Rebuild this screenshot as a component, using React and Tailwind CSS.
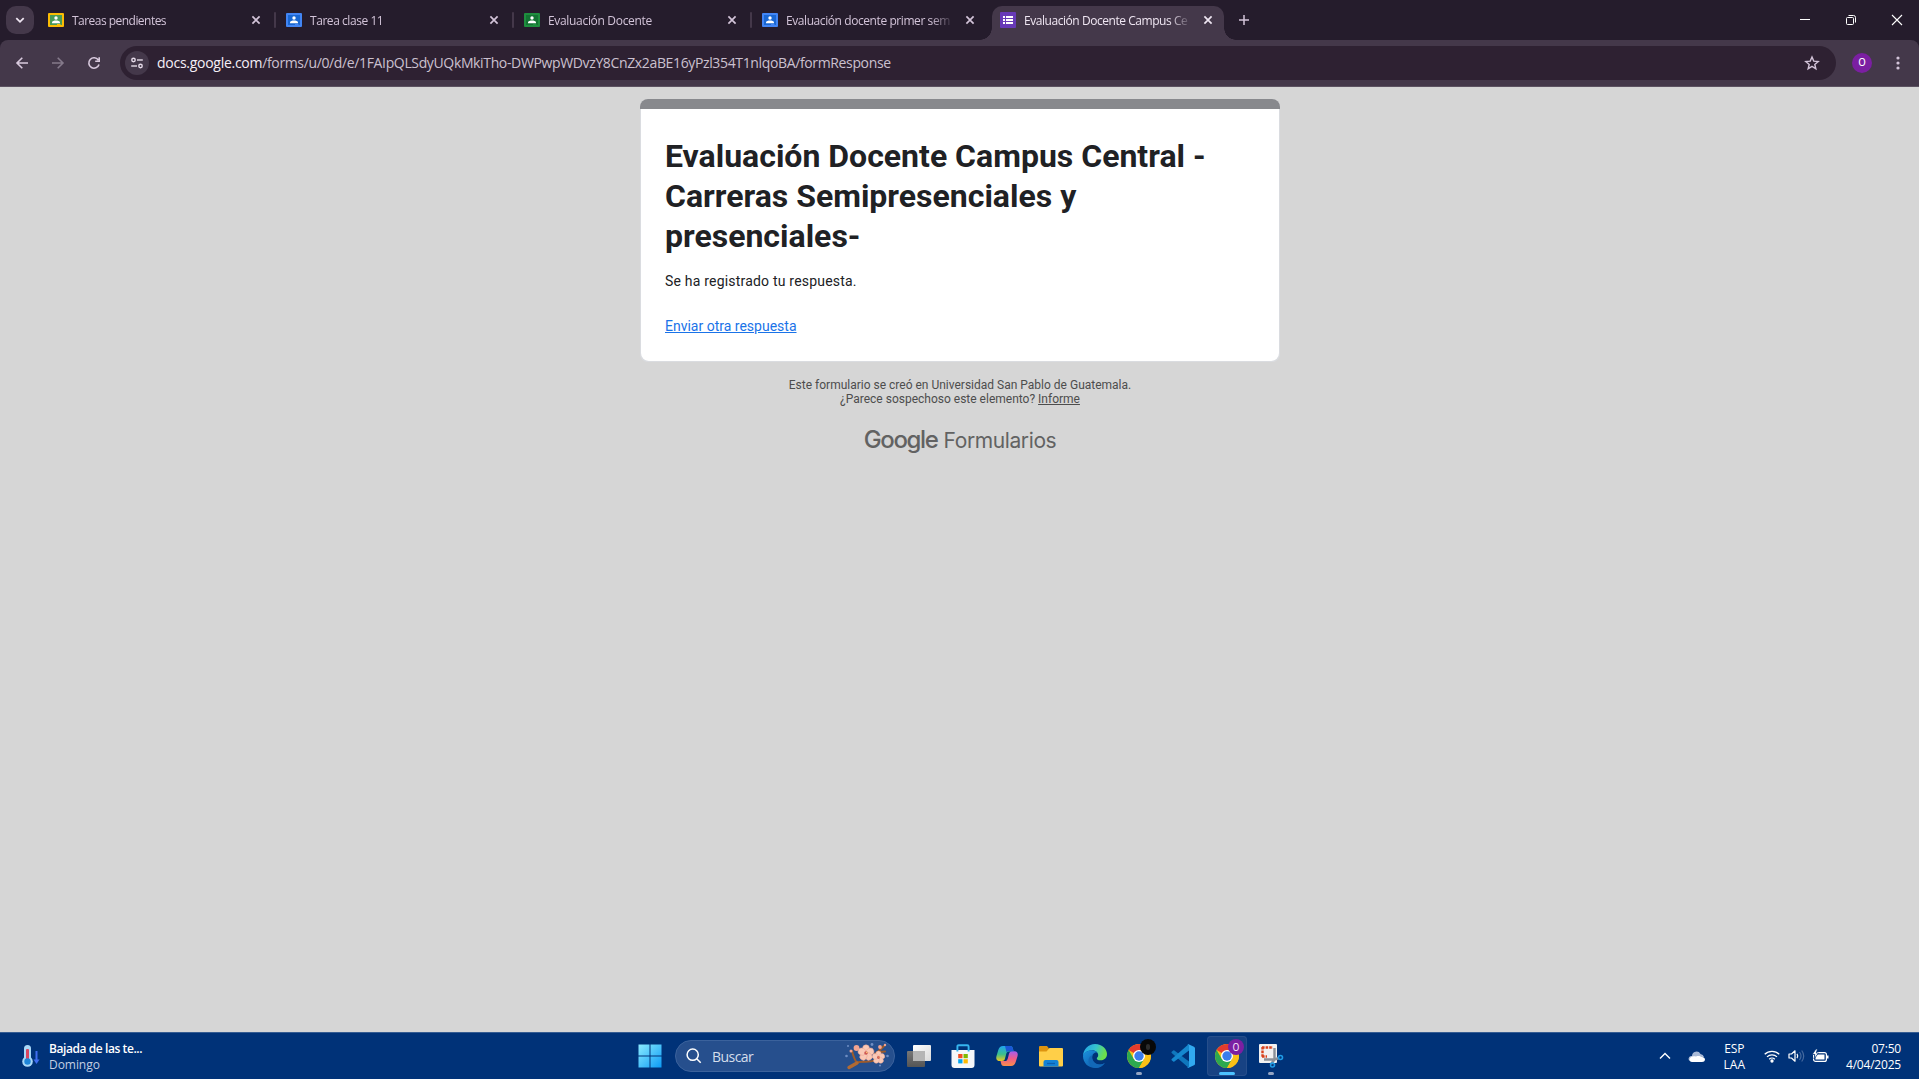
const SEGOE = "font-['Open_Sans','Noto_Sans',sans-serif]";

function ClassroomIcon({ frame, board }) {
  return (
    <svg width="16" height="16" viewBox="0 0 16 16" className="shrink-0">
      <rect x="0" y="1" width="16" height="14" rx="1" fill={frame} />
      <rect x="2" y="3" width="12" height="10" fill={board} />
      <circle cx="8" cy="6" r="1.7" fill="#fff" />
      <path d="M4 11.2V10.4C4 8.9 6.4 8.4 8 8.4s4 .5 4 2v.8z" fill="#fff" />
      <rect x="9" y="12" width="3.5" height="1" fill={frame} />
    </svg>
  );
}

function FormsIcon() {
  return (
    <svg width="16" height="16" viewBox="0 0 16 16" className="shrink-0">
      <rect width="16" height="16" rx="1" fill="#673ab7" />
      <path d="M3 4h2v2H3zM6 4h7v2H6zM3 7h2v2H3zM6 7h7v2H6zM3 10h2v2H3zM6 10h7v2H6z" fill="#fff" />
    </svg>
  );
}

function Close({ color = "#d3c4d9" }) {
  return (
    <svg width="16" height="16" viewBox="0 0 16 16" className="shrink-0">
      <path d="M4.4 4.4l7.2 7.2M11.6 4.4l-7.2 7.2" stroke={color} strokeWidth="1.7" />
    </svg>
  );
}

const tabs = [
  { title: "Tareas pendientes", cls: "tracking-[-0.53px]", icon: <ClassroomIcon frame="#fbbc04" board="#4a9a58" />, sep: true },
  { title: "Tarea clase 11", cls: "tracking-[-0.44px]", icon: <ClassroomIcon frame="#4285f4" board="#1967d2" />, sep: true },
  { title: "Evaluación Docente", cls: "tracking-[-0.32px]", icon: <ClassroomIcon frame="#1e8e3e" board="#137333" />, sep: true },
  { title: "Evaluación docente primer sem", cls: "tracking-[-0.42px]", icon: <ClassroomIcon frame="#4285f4" board="#1967d2" /> },
];

function TabTitle({ children, className }) {
  return (
    <span className={`ml-2 mt-px w-44 shrink-0 whitespace-nowrap text-[12px] leading-4 [mask-image:linear-gradient(to_right,#000_145px,transparent_168px)] ${className}`}>
      {children}
    </span>
  );
}

function TabStrip() {
  return (
    <div className="flex h-10 bg-[#251c2c]">
      <div className="ml-1.5 mt-1.5 flex size-7 items-center justify-center rounded-[10px] bg-[#44384a]">
        <svg width="12" height="12" viewBox="0 0 12 12" fill="none" stroke="#efe6f2" strokeWidth="1.8">
          <path d="M2.3 4.2L6 7.8l3.7-3.6" />
        </svg>
      </div>
      <div className="ml-1 flex">
        {tabs.map((t) => (
          <div key={t.title} className="flex w-[238px] items-center pl-2.5 text-[#d3c4d9]">
            {t.icon}
            <TabTitle className={t.cls}>{t.title}</TabTitle>
            <Close />
            {t.sep && <div className="ml-[10px] h-4 w-0.5 rounded-full bg-[#44384a]" />}
          </div>
        ))}
        <div className="relative ml-0.5 mt-1.5 flex h-[34px] w-[232px] rounded-t-[10px] bg-[#44384a] pl-2 pt-1.5 text-[#efe6f2]">
          <FormsIcon />
          <TabTitle className="tracking-[-0.45px]">Evaluación Docente Campus Ce</TabTitle>
          <Close color="#efe6f2" />
          <div className="absolute -left-3 bottom-0 size-3 bg-[radial-gradient(circle_at_0_0,transparent_11.5px,#44384a_12px)]" />
          <div className="absolute -right-3 bottom-0 size-3 bg-[radial-gradient(circle_at_100%_0,transparent_11.5px,#44384a_12px)]" />
        </div>
        <svg width="40" height="40" viewBox="0 0 40 40" stroke="#d3c4d9" strokeWidth="1.5">
          <path d="M15 20h10M20 15v10" />
        </svg>
      </div>
      <div className="ml-auto flex h-10 text-white">
        <svg width="46" height="40" viewBox="0 0 46 40" stroke="currentColor"><path d="M18 19.5h10" /></svg>
        <svg width="46" height="40" viewBox="0 0 46 40" fill="none" stroke="currentColor">
          <rect x="18.5" y="17.5" width="7" height="7" rx="1" />
          <path d="M20.5 15.5h5a2 2 0 0 1 2 2v5" />
        </svg>
        <svg width="45" height="40" viewBox="0 0 45 40" stroke="currentColor" strokeWidth="1.1"><path d="M18 15l10 10M28 15L18 25" /></svg>
      </div>
    </div>
  );
}

function Toolbar() {
  return (
    <div className="h-[47px] bg-[#251c2c]">
      <div className="flex h-full items-center rounded-t-lg border-b border-[#5c5261] bg-[#44384a]">
        <svg width="120" height="46" viewBox="0 0 120 46" fill="none" strokeWidth="1.6" className="shrink-0">
          <path d="M28 23H17.3M22.3 17.7L17 23l5.3 5.3" stroke="#d9cade" />
          <path d="M52 23h10.7M57.7 17.7L63 23l-5.3 5.3" stroke="#857a8b" />
          <path d="M98.3 20A5.2 5.2 0 1 0 99 24.5M99.2 17.2v4h-4" stroke="#d9cade" />
        </svg>
        <div className="flex h-[34px] w-[1716px] items-center rounded-full bg-[#2e2132] pl-[5px] pr-4">
          <div className="flex size-6 items-center justify-center rounded-full bg-[#44384a]">
            <svg width="14" height="14" viewBox="0 0 14 14" fill="none" stroke="#e6dbe9" strokeWidth="1.4">
              <circle cx="3.5" cy="4" r="1.7" /><path d="M7 4h5.8" />
              <circle cx="10.5" cy="10" r="1.7" /><path d="M1.2 10H7" />
            </svg>
          </div>
          <span className={`ml-2 whitespace-nowrap text-[14px] leading-5 tracking-[-0.36px] text-[#cbc0cf] ${SEGOE}`}>
            <span className="tracking-[-0.27px] text-[#f5eff7]">docs.google.com</span>/forms/u/0/d/e/1FAIpQLSdyUQkMkiTho-DWPwpWDvzY8CnZx2aBE16yPzl354T1nlqoBA/formResponse
          </span>
          <svg width="16" height="16" viewBox="0 0 16 16" fill="none" stroke="#d3c4d9" strokeWidth="1.4" className="ml-auto">
            <path d="M8 2l1.75 4.1 4.45.4-3.4 2.9 1.05 4.35L8 11.4l-3.85 2.35L5.2 9.4 1.8 6.5l4.45-.4z" />
          </svg>
        </div>
        <div className="ml-4 flex size-5 items-center justify-center rounded-full bg-[#7b1fa2] font-['Roboto',sans-serif] text-[11px] text-white">O</div>
        <svg width="20" height="20" viewBox="0 0 20 20" fill="#d3c4d9" className="ml-4">
          <circle cx="10" cy="5" r="1.6" /><circle cx="10" cy="10" r="1.6" /><circle cx="10" cy="15" r="1.6" />
        </svg>
      </div>
    </div>
  );
}

function FormPage() {
  return (
    <main className="flex flex-1 flex-col items-center bg-[#d6d6d6] pl-px pt-3 font-['Roboto',sans-serif]">
      <section className="h-[263px] w-[640px] overflow-hidden rounded-lg border-b border-[#dadce0] bg-[#dadce0]">
        <div className="h-2.5 bg-[#88898d]" />
        <div className="mx-px h-[252px] rounded-b-lg bg-white px-6 pt-[27px] text-[#202124]">
          <h1 className="text-[32px] font-bold leading-10">
            Evaluación Docente Campus Central -<br />Carreras Semipresenciales y<br />presenciales-
          </h1>
          <p className="mt-[15px] text-[14px] leading-5 tracking-[0.2px]">Se ha registrado tu respuesta.</p>
          <a className="mt-[25px] block text-[14px] leading-5 text-[#1a73e8] underline">Enviar otra respuesta</a>
        </div>
      </section>
      <div className="mt-4 text-center text-[12px] leading-[14px] text-[#4d4d4d]">
        <p>Este formulario se creó en Universidad San Pablo de Guatemala.</p>
        <p>¿Parece sospechoso este elemento? <a className="underline">Informe</a></p>
      </div>
      <div className="mt-[18px] flex items-baseline whitespace-nowrap text-[#626262]">
        <span className="font-['Inter',sans-serif] text-[24px] font-medium leading-8 tracking-[-1.35px]">Google</span>
        <span className="ml-[6px] font-['Inter',sans-serif] text-[21px] leading-8 tracking-[-0.4px]">Formularios</span>
      </div>
    </main>
  );
}

function WeatherIcon() {
  return (
    <svg width="20" height="24" viewBox="0 0 20 24">
      <rect x="3" y="1" width="7" height="17" rx="3.5" fill="#a9d8f8" />
      <circle cx="6.5" cy="17.5" r="5.3" fill="#a9d8f8" />
      <rect x="5" y="5" width="3" height="11" rx="1" fill="#d8455f" />
      <circle cx="6.5" cy="17.5" r="3.2" fill="#1f86d9" />
      <path d="M15.5 7v10" stroke="#3f6df0" strokeWidth="2" />
      <path d="M12.5 15.5h6L15.5 20z" fill="#3f6df0" />
    </svg>
  );
}

function Flower({ x, y, s = 1 }) {
  return (
    <g transform={`translate(${x} ${y}) scale(${s})`}>
      {[0, 72, 144, 216, 288].map((a) => (
        <ellipse key={a} cx="0" cy="-3.6" rx="2.9" ry="3.2" fill="#fac9b6" stroke="#eba08f" strokeWidth=".4" transform={`rotate(${a})`} />
      ))}
      <circle r="1.5" fill="#cf5a55" />
      <circle cx=".6" cy="-.5" r=".6" fill="#fbd36b" />
    </g>
  );
}

function Blossom() {
  return (
    <svg width="46" height="28" viewBox="0 0 46 28" fill="none">
      <path d="M6 25c4 0 5-4 9-5 8-1 15 1 22-4M13 21c-3-4-4-8-5-12M31 12c4-3 6-5 9-8M36 10l5-.5" stroke="#9c5b2c" strokeWidth="2" strokeLinecap="round" />
      <path d="M5 25.5l8-4.5" stroke="#b06a34" strokeWidth="3.4" strokeLinecap="round" />
      <Flower x={22} y={11} s={1.2} />
      <Flower x={34.5} y={15.5} s={0.95} />
      <circle cx="12.5" cy="6" r="2.9" fill="#f3a491" />
      <circle cx="7" cy="9" r="1.5" fill="#f3a491" />
      <circle cx="36" cy="5" r="1.9" fill="#f3a491" />
      <circle cx="41" cy="3" r="1.2" fill="#f3a491" />
      <g fill="#6f8ec4"><circle cx="28" cy="2.5" r="1.4" /><circle cx="2.5" cy="14" r="1.3" /><circle cx="43.5" cy="14" r="1.3" /><circle cx="4" cy="4" r="1" /><circle cx="36" cy="23.500" r="1" /></g>
    </svg>
  );
}

function ChromeLogo() {
  return (
    <svg width="24" height="24" viewBox="0 0 24 24">
      <circle cx="12" cy="12" r="12" fill="#fbc116" />
      <path d="M12 12L1.61 6A12 12 0 0 1 22.39 6H12z" fill="#e33b2e" />
      <path d="M1.61 6A12 12 0 0 0 12 24l5.2-9L12 12 6.8 15z" fill="#2da94f" />
      <path d="M12 6h10.39A12 12 0 0 1 12 24l5.2-9z" fill="#fbc116" />
      <circle cx="12" cy="12" r="6" fill="#fff" />
      <circle cx="12" cy="12" r="4.7" fill="#3b7ded" />
    </svg>
  );
}

function TaskViewIcon() {
  return (
    <svg width="24" height="24" viewBox="0 0 24 24">
      <defs>
        <linearGradient id="tvBack" x1="0" y1="0" x2="1" y2="1"><stop stopColor="#fff" /><stop offset="1" stopColor="#d9d9d9" /></linearGradient>
        <linearGradient id="tvFront" x1="0" y1="0" x2="0" y2="1"><stop stopColor="#777" /><stop offset="1" stopColor="#555" /></linearGradient>
      </defs>
      <rect x="6" y="1" width="18" height="16" rx="1" fill="url(#tvBack)" />
      <rect x="0" y="7" width="18" height="16" rx="1" fill="url(#tvFront)" />
      <path d="M6 7h12v10H6z" fill="#b5b5b5" />
    </svg>
  );
}

function StoreIcon() {
  return (
    <svg width="24" height="24" viewBox="0 0 24 24">
      <path d="M.5 6h23v15a3 3 0 0 1-3 3h-17a3 3 0 0 1-3-3z" fill="#f5f7f9" />
      <path d="M6.400 7.500V2.500q0-1.300 1.300-1.300h8.600q1.300 0 1.300 1.300v5" fill="none" stroke="#35b5ef" strokeWidth="1.9" />
      <path d="M7.200 10h4.300v4.200H7.200z" fill="#f04e23" /><path d="M12.500 10h4.300v4.200h-4.300z" fill="#7fba00" />
      <path d="M7.200 15.200h4.300v4.200H7.200z" fill="#00a4ef" /><path d="M12.500 15.200h4.300v4.200h-4.300z" fill="#ffb900" />
    </svg>
  );
}

function CopilotIcon() {
  return (
    <svg width="24" height="24" viewBox="0 0 24 24">
      <defs>
        <linearGradient id="cpA" x1="0" y1="0" x2="0" y2="1"><stop stopColor="#1fa4f1" /><stop offset=".55" stopColor="#3bbf8d" /><stop offset="1" stopColor="#f2c81d" /></linearGradient>
        <linearGradient id="cpB" x1="0" y1="0" x2="0" y2="1"><stop stopColor="#a45cf0" /><stop offset=".5" stopColor="#ee5c8a" /><stop offset="1" stopColor="#fb8f48" /></linearGradient>
      </defs>
      <path d="M10 2h5c2 0 2.600 1.300 3 3l.6 2.500H14c-1.800 0-2.300 1-2.800 2.600L10 14.500c-.5 1.800-1.300 2.500-3 2.500H4.500C1.500 17 .8 14.500 1.500 12l1.800-6C4.200 3.200 5.500 2 8 2z" fill="url(#cpA)" />
      <path d="M14 22H9c-2 0-2.600-1.300-3-3l-.5-2h4.300c1.800 0 2.500-1 3-2.600L14 9.800c.5-1.800 1.300-2.600 3-2.600h2.500c3 0 3.700 2.500 3 5l-1.800 5.800c-.9 2.800-2.200 4-4.700 4z" fill="url(#cpB)" />
      <path d="M10 2h5c2 0 2.600 1.300 3 3l.6 2.300H14c-1.300 0-2 .4-2.400 1.300z" fill="#1a57d6" />
    </svg>
  );
}

function ExplorerIcon() {
  return (
    <svg width="24" height="24" viewBox="0 0 24 24">
      <path d="M0 3q0-1 1-1h7l2 2.500V8H0z" fill="#dd9410" />
      <path d="M0 7.500h7.500L10.500 4H23q1 0 1 1v16.500q0 1-1 1H1q-1 0-1-1z" fill="#ffcf48" />
      <path d="M4.500 22.500V18q0-2 2-2h11q2 0 2 2v4.500z" fill="#1482d6" />
      <path d="M8 19.500h8" stroke="#0d5fae" strokeWidth="1.3" />
    </svg>
  );
}

function EdgeIcon() {
  return (
    <svg width="24" height="24" viewBox="0 0 24 24">
      <defs>
        <linearGradient id="edTop" x1="0" y1="0" x2="1" y2=".3"><stop stopColor="#1f9de8" /><stop offset=".55" stopColor="#35c4cf" /><stop offset="1" stopColor="#6be04a" /></linearGradient>
        <linearGradient id="edLow" x1="0" y1="0" x2="1" y2="1"><stop stopColor="#1b93e0" /><stop offset="1" stopColor="#0c4f9e" /></linearGradient>
      </defs>
      <path d="M0 12C.2 5 5.500 0 12 0c7.500 0 12 5.200 12 10 0 4-3 6.300-6.500 6.300-2.800 0-3.700-1-3.700-1.800 0-1 1.400-1.200 1.400-3.500 0-2.400-2.400-4.800-6-4.800C4.500 6.200 1 9 0 12z" fill="url(#edTop)" />
      <path d="M0 12c.6-3.500 4.500-5.800 9-5.800 2.500 0 4.500 1 5.500 2.500-3-1-5.500 1.700-5.500 5 0 4 3.500 7 8 6.800 2-.1 3.700-.8 4.900-1.500C20 22 16.300 24 12 24 5.400 24 0 19 0 12z" fill="url(#edLow)" />
      <path d="M9.600 11c-1.500 4.500 2 9.500 7.400 9.500 2 0 3.700-.8 4.900-1.500-2 3-5.700 5-9.700 5C7.600 23 5.200 19 5.500 16c.2-2.500 2-4.300 4.100-5z" fill="#1268b8" />
    </svg>
  );
}

function VSCodeIcon() {
  return (
    <svg width="24" height="24" viewBox="0 0 24 24">
      <path d="M.7 7.800L2.200 6.500q.6-.5 1.200 0L18 17.500V23.500q-.8 0-1.300-.6L.7 9q-.6-.6 0-1.200z" fill="#0f77bd" />
      <path d="M.7 16.200l1.500 1.300q.6.500 1.200 0L18 6.500V.5q-.8 0-1.300.6L.7 15q-.6.600 0 1.200z" fill="#1588cf" />
      <path d="M17.500.2L23 2.700q1 .5 1 1.500v15.600q0 1-1 1.500l-5.500 2.500q-.9.200-1.300-.6 1.600.6 1.800-1V1.800Q17.800.2 16.200.8q.5-.8 1.300-.6z" fill="#31a9f0" />
    </svg>
  );
}

function SnipIcon() {
  return (
    <svg width="24" height="24" viewBox="0 0 24 24" className="overflow-visible">
      <rect x="0" y="0" width="18" height="19" rx="1" fill="#f1f1f1" />
      <path d="M3 3.500h11M3 12.500h5M3.500 3v10" stroke="#d9401b" strokeWidth="2.4" strokeDasharray="2.6 1" fill="none" />
      <path d="M15.500 4v11.500L12 20M5 15.500h10.500L20 14" stroke="#8b9097" strokeWidth="2.4" fill="none" />
      <circle cx="21.500" cy="13.500" r="2" fill="none" stroke="#1e9be6" strokeWidth="1.6" />
      <circle cx="13.500" cy="21" r="2" fill="none" stroke="#1e9be6" strokeWidth="1.6" />
    </svg>
  );
}

function Cell({ children, state }) {
  return (
    <div className="relative flex h-full w-11 items-center justify-center">
      <div className={state === "active" ? "flex size-10 items-center justify-center rounded bg-[#174283] ring-1 ring-inset ring-[#264e8b]" : "flex"}>{children}</div>
      {state === "open" && <div className="absolute bottom-1 h-[3px] w-1.5 rounded-full bg-[#93a5c4]" />}
      {state === "active" && <div className="absolute bottom-1 h-[3px] w-4 rounded-full bg-[#4cc2ff]" />}
    </div>
  );
}

function Taskbar() {
  return (
    <footer className={`flex h-[47px] border-t border-[#355c92] bg-[#003278] text-white ${SEGOE}`}>
      <div className="flex w-[628px] items-center pl-[21px]">
        <WeatherIcon />
        <div className="ml-2 mt-px text-[12px] leading-4">
          <p className="font-semibold tracking-[-0.42px]">Bajada de las te...</p>
          <p className="tracking-[-0.05px] text-[#c3cfe2]">Domingo</p>
        </div>
      </div>
      <div className="flex items-center">
        <Cell>
          <svg width="24" height="24" viewBox="0 0 24 24">
            <defs><linearGradient id="win" x1="0" y1="0" x2="1" y2="1"><stop stopColor="#8bebff" /><stop offset="1" stopColor="#0c9bf5" /></linearGradient></defs>
            <path d="M.5.5h11v11H.5zM12.500.5h11v11h-11zM.5 12.500h11v11H.5zM12.500 12.500h11v11h-11z" fill="url(#win)" />
          </svg>
        </Cell>
        <div className="ml-[3px] mr-0.5 flex h-8 w-[220px] items-center rounded-full border border-[#3b629c] bg-[#264f8d] pl-2.5 pr-1">
          <svg width="16" height="16" viewBox="0 0 16 16" fill="none" stroke="#fff" strokeWidth="1.5">
            <circle cx="6.7" cy="6.7" r="5.6" /><path d="M10.700 10.700l4 4" />
          </svg>
          <span className="ml-2.5 mt-px text-[14px] leading-5 tracking-[-0.55px] text-[#d5deeb]">Buscar</span>
          <span className="ml-auto"><Blossom /></span>
        </div>
        <Cell><TaskViewIcon /></Cell>
        <Cell><StoreIcon /></Cell>
        <Cell><CopilotIcon /></Cell>
        <Cell><ExplorerIcon /></Cell>
        <Cell><EdgeIcon /></Cell>
        <Cell state="open">
          <ChromeLogo />
          <div className="absolute left-[23px] top-[6px] flex size-4 items-center justify-center rounded-full bg-[#080808]">
            <div className="h-1.5 w-1 rounded-sm bg-[#2c2c2c]" />
          </div>
        </Cell>
        <Cell><VSCodeIcon /></Cell>
        <Cell state="active">
          <ChromeLogo />
          <div className="absolute left-[23px] top-[6px] flex size-4 items-center justify-center rounded-full bg-[#7b1fa2] font-['Roboto',sans-serif] text-[10px] text-[#f1dff7]">O</div>
        </Cell>
        <Cell state="open"><SnipIcon /></Cell>
      </div>
      <div className="ml-auto flex items-center pr-[18px] text-[12px] leading-4">
        <svg width="12" height="12" viewBox="0 0 12 12" fill="none" stroke="#fff" strokeWidth="1.4"><path d="M1 8.500l5-5 5 5" /></svg>
        <svg width="18" height="12" viewBox="0 0 18 12" className="ml-[17px]">
          <path d="M4 6a4.500 4.500 0 0 1 8.500-2A4 4 0 0 1 16 7L8 9 1 10.500A3 3 0 0 1 4 6z" fill="#a9bad7" />
          <path d="M1.500 9.500C2 6.500 5 5.500 8 6.500c2-.8 4.500-.5 5 .5 2-.5 4 .8 4 2.500S15.500 12 14 12H4c-1.500 0-2.700-1-2.500-2.500z" fill="#fff" />
        </svg>
        <div className="ml-[18px] mt-px text-center"><p className="tracking-[-0.2px]">ESP</p><p>LAA</p></div>
        <svg width="16" height="14" viewBox="0 0 16 14" fill="none" stroke="#fff" strokeWidth="1.3" className="ml-[19px]">
          <path d="M.7 5.300a10.500 10.500 0 0 1 14.600 0M3 7.900a7.200 7.200 0 0 1 10 0M5.200 10.300a4 4 0 0 1 5.600 0" />
          <circle cx="8" cy="12" r="1" fill="#fff" />
        </svg>
        <svg width="17" height="14" viewBox="0 0 17 14" fill="none" stroke="#fff" strokeWidth="1.2" className="ml-2">
          <path d="M1 5h2.500L7 1.800v10.400L3.500 9H1z" strokeLinejoin="round" />
          <path d="M9 4.800q1.500 2.200 0 4.400" />
          <path d="M11.500 3q3 4 0 8M13.700 1.500q4 5.500 0 11" stroke="#456a9f" />
        </svg>
        <svg width="17" height="14" viewBox="0 0 17 14" className="ml-[7px]">
          <rect x="1.600" y="3.600" width="12.800" height="8.800" rx="2" fill="none" stroke="#fff" strokeWidth="1.2" />
          <rect x="3.500" y="5.500" width="9" height="5" fill="#fff" />
          <rect x="15" y="6.500" width="1.500" height="3" fill="#fff" />
          <path d="M3.800 0L.3 5.500h2.500L2 10l4.500-6H4.300L5.500 0z" fill="#fff" stroke="#003278" strokeWidth=".8" />
        </svg>
        <div className="ml-4 mt-px w-14 whitespace-nowrap text-right tracking-[-0.2px]"><p>07:50</p><p>4/04/2025</p></div>
      </div>
    </footer>
  );
}

export default function App() {
  return (
    <div className={`flex h-screen w-full flex-col overflow-hidden ${SEGOE}`}>
      <TabStrip />
      <Toolbar />
      <FormPage />
      <Taskbar />
    </div>
  );
}
